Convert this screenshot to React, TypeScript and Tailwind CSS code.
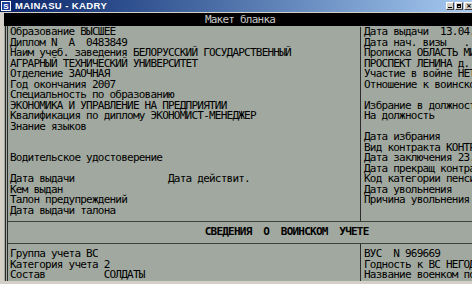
import React from "react";

const MONO =
  "font-['DejaVu_Sans_Mono','Liberation_Mono',monospace] text-[11px] leading-[10.5px] tracking-[-0.77px] whitespace-pre text-black";

function Lines({ lines }: { lines: string[] }) {
  return (
    <div className={`flex flex-col ${MONO}`}>
      {lines.map((l, i) => (
        <div key={i} className="h-[10.5px]">
          {l || "\u00a0"}
        </div>
      ))}
    </div>
  );
}

const LEFT = [
  "Образование ВЫСШЕЕ",
  "Диплом N  А  0483849",
  "Наим учеб. заведения БЕЛОРУССКИЙ ГОСУДАРСТВЕННЫЙ",
  "АГРАРНЫЙ ТЕХНИЧЕСКИЙ УНИВЕРСИТЕТ",
  "Отделение ЗАОЧНАЯ",
  "Год окончания 2007",
  "Специальность по образованию",
  "ЭКОНОМИКА И УПРАВЛЕНИЕ НА ПРЕДПРИЯТИИ",
  "Квалификация по диплому ЭКОНОМИСТ-МЕНЕДЖЕР",
  "Знание языков",
  "",
  "",
  "Водительское удостоверение",
  "",
  "Дата выдачи                Дата действит.",
  "Кем выдан",
  "Талон предупреждений",
  "Дата выдачи талона",
];

const RIGHT = [
  "Дата выдачи  13.04.2007",
  "Дата нач. визы   .  .",
  "Прописка ОБЛАСТЬ МИНСКАЯ",
  "ПРОСПЕКТ ЛЕНИНА д. 12",
  "Участие в войне НЕТ",
  "Отношение к воинской обязанности",
  "",
  "Избрание в должность",
  "На должность",
  "",
  "Дата избрания",
  "Вид контракта КОНТРАКТ",
  "Дата заключения 23.08.2007",
  "Дата прекращ контракта",
  "Код категории пенсии",
  "Дата увольнения",
  "Причина увольнения",
];

const BOTTOM_LEFT = ["Группа учета ВС", "Категория учета 2", "Состав          СОЛДАТЫ"];
const BOTTOM_RIGHT = ["ВУС  N 969669", "Годность к ВС НЕГОДЕН", "Название военком по месту"];

function TitleBar() {
  return (
    <div className="h-[12px] flex items-center bg-linear-to-r from-[#0a246a] to-[#a6caf0] pl-[1px]">
      <svg width="10" height="10" viewBox="0 0 10 10" className="shrink-0">
        <rect x="0.5" y="0.5" width="9" height="9" fill="#1c3c9c" stroke="#ffffff" />
        <text x="5" y="8.2" textAnchor="middle" fontSize="8" fontWeight="bold" fill="#ffffff" fontFamily="Liberation Sans, sans-serif">
          S
        </text>
      </svg>
      <span className="ml-[4px] font-['Liberation_Sans',sans-serif] font-bold text-[9.5px] leading-[10px] text-white tracking-[0.4px] whitespace-pre">
        MAINASU - KADRY
      </span>
      <div className="flex-1" />
      <div className="flex gap-[1px] mr-[-3px]">
        <div className="w-[8px] h-[8px] bg-[#d4d0c8] border-t border-l border-white border-b border-r border-b-[#404040] border-r-[#404040] flex items-end justify-center pb-[1px]">
          <div className="w-[4px] h-[1px] bg-black" />
        </div>
        <div className="w-[8px] h-[8px] bg-[#d4d0c8] border-t border-l border-white border-b border-r border-b-[#404040] border-r-[#404040] flex items-center justify-center">
          <div className="w-[4px] h-[4px] border border-black border-t-2" />
        </div>
        <div className="w-[11px] h-[8px] bg-[#d4d0c8] border-t border-l border-white border-b border-b-[#404040] flex items-center justify-start pl-[1px] font-['DejaVu_Sans',sans-serif] text-[7px] leading-[7px] font-bold text-black">
          ×
        </div>
      </div>
    </div>
  );
}

export default function App() {
  return (
    <div className="w-[472px] h-[284px] bg-[#d4d0c8] overflow-hidden flex flex-col">
      <TitleBar />
      <div className="h-[1px] shrink-0" />
      <div className="flex-1 flex flex-col pl-[4px] min-h-0">
        <div className="h-[13px] shrink-0 bg-black flex items-center justify-center">
          <span className="font-['DejaVu_Sans_Mono',monospace] text-[11px] leading-[11px] tracking-[-0.77px] text-[#c8c8c8] whitespace-pre ml-[4px]">
            Макет бланка
          </span>
        </div>
        <div className="h-[255px] shrink-0 flex bg-[#a0a89f] pl-[1px]">
          <div className="flex-1 flex border-l border-[#2c2c2c] pl-[1px]">
            <div className="flex-1 flex flex-col border-l border-[#2c2c2c] min-w-0">
              {/* top */}
              <div className="h-[195px] flex pt-[1px]">
                <div className="w-[352px] shrink-0 pl-[2px] overflow-hidden">
                  <Lines lines={LEFT} />
                </div>
                <div className="w-[1px] bg-[#2c2c2c] shrink-0" />
                <div className="flex-1 min-w-0 overflow-hidden pl-[3px]">
                  <Lines lines={RIGHT} />
                </div>
              </div>
              <div className="h-[1px] bg-[#404040]" />
              <div className="h-[21px] flex items-center justify-center">
                <span className={`${MONO} font-bold ml-[14px]`}>СВЕДЕНИЯ  О  ВОИНСКОМ  УЧЕТЕ</span>
              </div>
              <div className="h-[1px] bg-[#404040]" />
              <div className="flex-1 flex">
                <div className="w-[352px] shrink-0 pl-[2px] pt-[5px] overflow-hidden">
                  <Lines lines={BOTTOM_LEFT} />
                </div>
                <div className="w-[1px] bg-[#2c2c2c] shrink-0" />
                <div className="flex-1 min-w-0 overflow-hidden pl-[3px] pt-[5px]">
                  <Lines lines={BOTTOM_RIGHT} />
                </div>
              </div>
            </div>
          </div>
        </div>
      </div>
    </div>
  );
}
